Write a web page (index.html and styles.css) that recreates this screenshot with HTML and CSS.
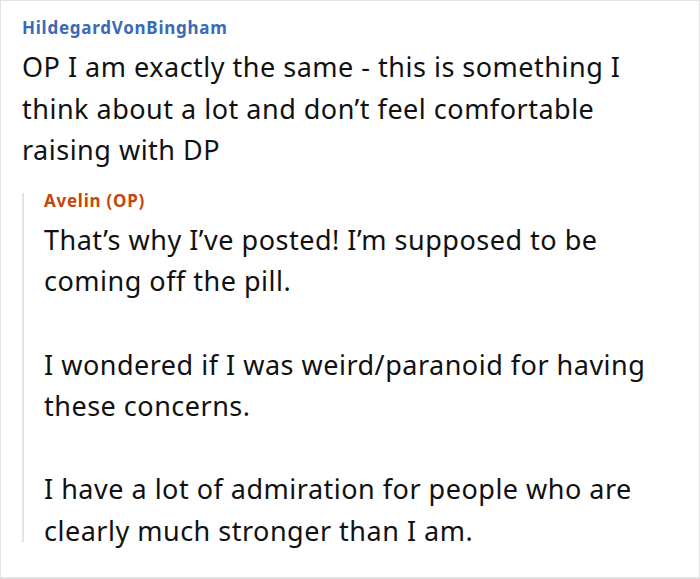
FILE: index.html
```html
<!DOCTYPE html>
<html>
<head>
<meta charset="utf-8">
<link rel="stylesheet" href="styles.css">
</head>
<body>
<div class="frame">
  <div class="comment">
    <div class="author author-blue">HildegardVonBingham</div>
    <div class="text text-top">OP I am exactly the same - this is something I think about a lot and don’t feel comfortable raising with DP</div>
    <div class="reply">
      <div class="author author-op">Avelin (OP)</div>
      <div class="text text-reply">That’s why I’ve posted! I’m supposed to be coming off the pill.<br><br>I wondered if I was weird/paranoid for having these concerns.<br><br>I have a lot of admiration for people who are clearly much stronger than I am.</div>
    </div>
  </div>
</div>
</body>
</html>
```
FILE: styles.css
```css
html, body {
  margin: 0;
  padding: 0;
  background: #fff;
}
.frame {
  width: 700px;
  height: 579px;
  box-sizing: border-box;
  border: 1px solid #e2e2e2;
  border-bottom-width: 2px;
  font-family: "Noto Sans", sans-serif;
  color: #111;
}
.comment {
  padding: 15px 0 0 21px;
}
.author {
  font-size: 17px;
  font-weight: 700;
  line-height: 24px;
  letter-spacing: 0.75px;
}
.author-blue { color: #3a69b7; }
.author-op { color: #c5470d; }
.text {
  font-size: 27px;
  line-height: 41.6px;
  margin-top: 6px;
  letter-spacing: 0.5px;
}
.text-top {
  width: 620px;
}
.text-reply {
  width: 640px;
}
.reply {
  position: relative;
  margin-top: 18px;
  padding-left: 22px;
}
.reply::before {
  content: "";
  position: absolute;
  left: 0;
  top: 4px;
  bottom: 10px;
  width: 2px;
  background: #e3e3e3;
}
```
